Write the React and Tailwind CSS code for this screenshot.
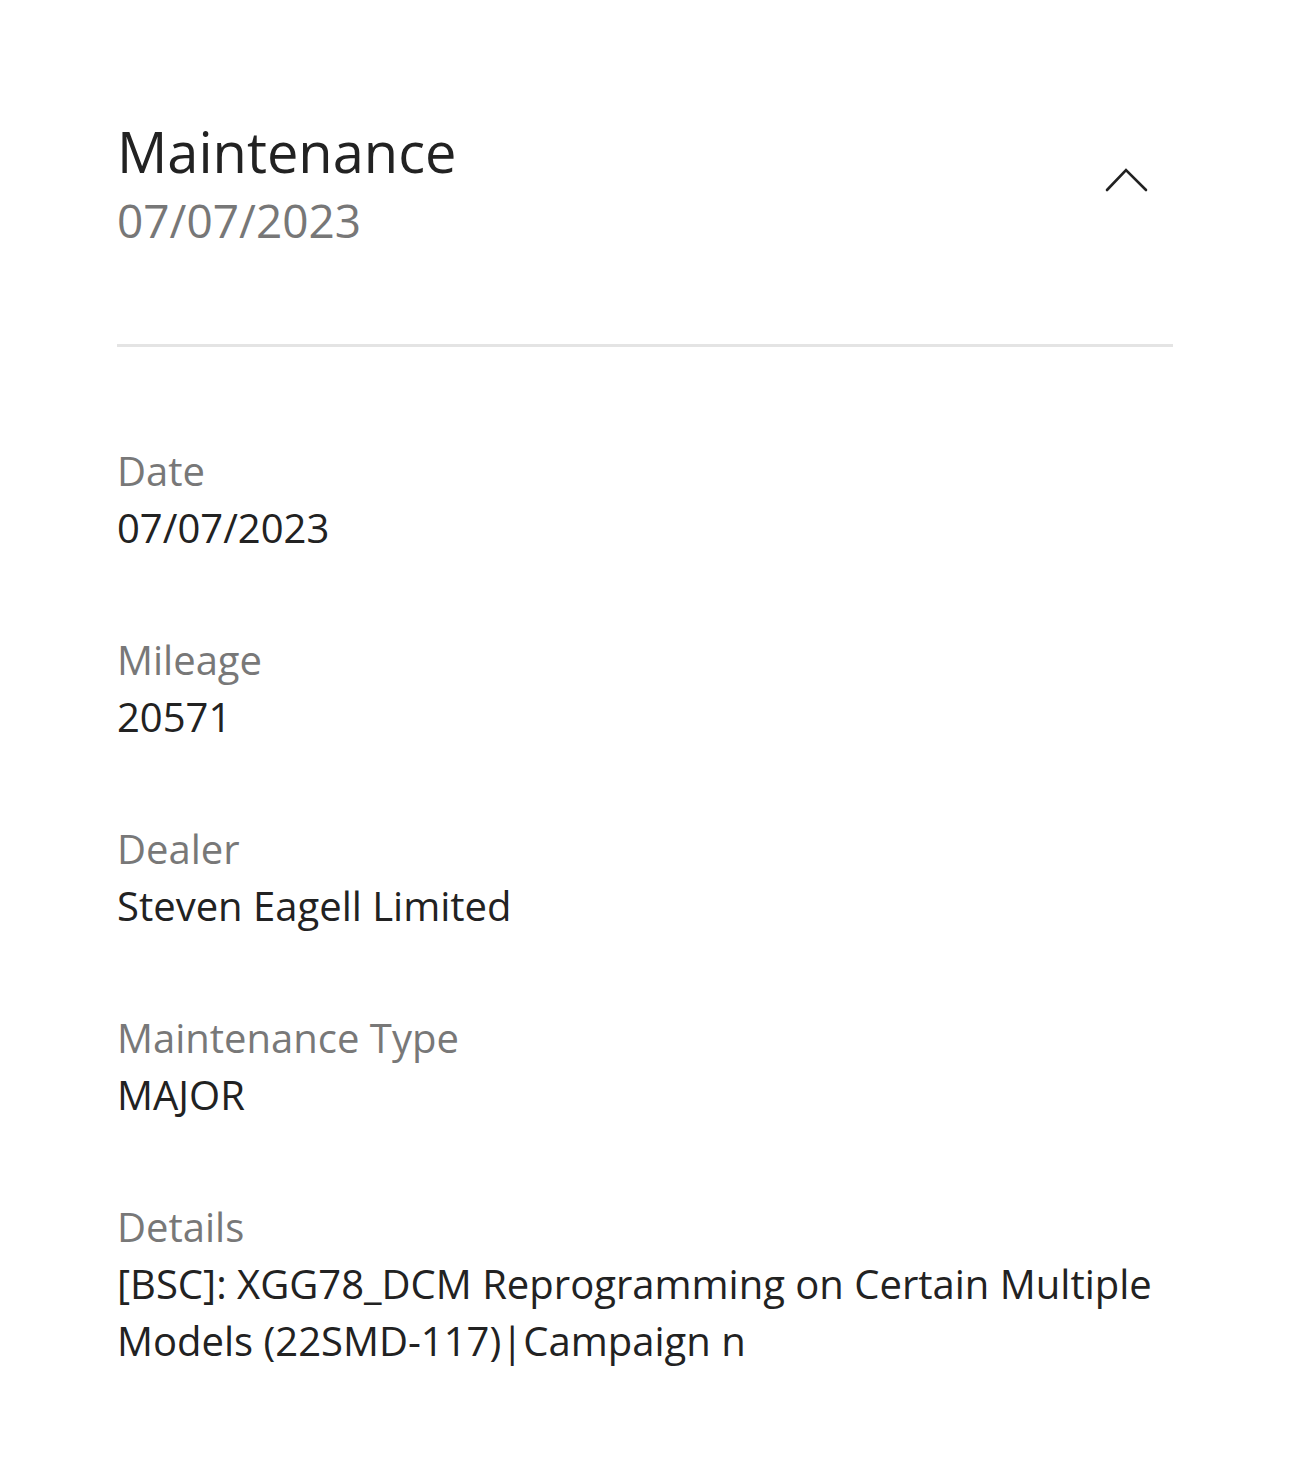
import React from "react";

const rows = [
  { label: "Date", value: "07/07/2023" },
  { label: "Mileage", value: "20571" },
  { label: "Dealer", value: "Steven Eagell Limited" },
  { label: "Maintenance Type", value: "MAJOR" },
  {
    label: "Details",
    value:
      "[BSC]: XGG78_DCM Reprogramming on Certain Multiple Models (22SMD-117)|Campaign n",
  },
];

function ChevronUp() {
  return (
    <svg width="46" height="28" viewBox="0 0 46 28" fill="none" className="mt-[48px] mr-[24px] shrink-0">
      <path d="M4 25 L23 5 L43 25" stroke="#222" strokeWidth="2.6" strokeLinecap="round" strokeLinejoin="miter" />
    </svg>
  );
}

export default function App() {
  return (
    <div className="min-h-[1460px] bg-white px-[117px] pt-[117px] font-['Open_Sans',sans-serif]">
      <div className="flex items-start justify-between">
        <div>
          <h1 className="text-[56px] leading-[68px] text-[#222] font-normal">Maintenance</h1>
          <p className="text-[46px] leading-[70px] text-[#777] font-normal">07/07/2023</p>
        </div>
        <ChevronUp />
      </div>

      <div className="mt-[89px] h-[3px] bg-[#e4e4e4]" />

      <div className="mt-[95px] flex flex-col gap-[75px]">
        {rows.map((row) => (
          <div key={row.label}>
            <div className="text-[40px] leading-[57px] text-[#787878]">{row.label}</div>
            <div className="text-[40px] leading-[57px] text-[#222]">{row.value}</div>
          </div>
        ))}
      </div>
    </div>
  );
}
